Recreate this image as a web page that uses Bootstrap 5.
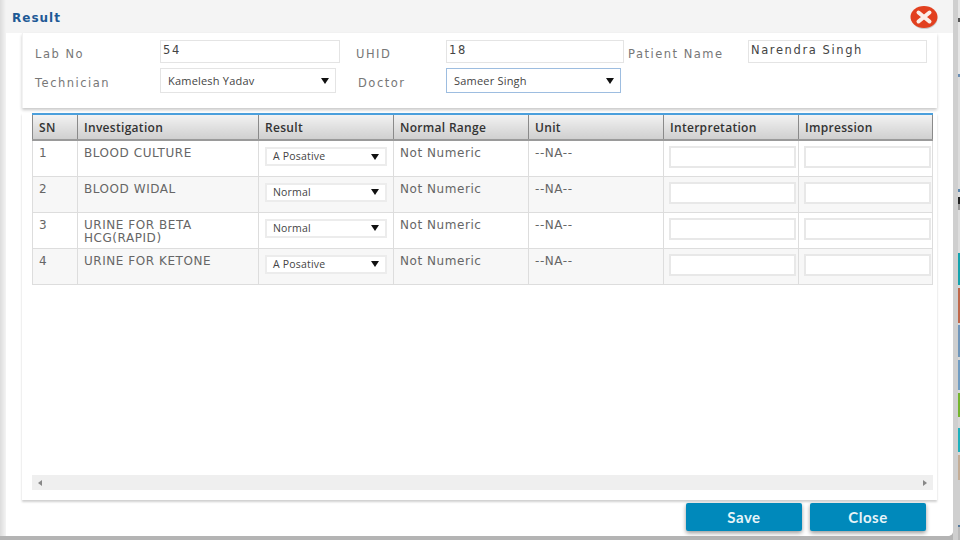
<!DOCTYPE html>
<html lang="en">
<head>
<meta charset="utf-8">
<link href="https://cdn.jsdelivr.net/npm/bootstrap@5.3.0/dist/css/bootstrap.min.css" rel="stylesheet">
<style>
html,body{margin:0;height:540px;overflow:hidden;background:#b4b4b4;}
body{font-family:"DejaVu Sans",sans-serif;color:#555;display:flex;align-items:flex-start;}
.shell{width:953px;height:536px;flex:none;background:linear-gradient(90deg,#dcdcdc,#f4f4f4 6px);display:flex;flex-direction:column;border-radius:0 0 5px 0;}
.rail{flex:1;height:540px;display:flex;justify-content:flex-end;background:#cfcfcf;}
.strip{width:2px;height:540px;background:linear-gradient(180deg,#e6e6e6 0,#e6e6e6 18px,#555 18px,#555 22px,#e6e6e6 22px,#e6e6e6 74px,#6b8fb5 74px,#6b8fb5 77px,#dcdcdc 77px,#dcdcdc 189px,#5b86ad 189px,#5b86ad 192px,#ddd 192px,#ddd 197px,#222 197px,#222 204px,#999 204px,#999 210px,#ddd 210px,#ddd 253px,#14a3ae 253px,#14a3ae 285px,#d8d8d8 285px,#d8d8d8 288px,#c0674a 288px,#c0674a 323px,#d8d8d8 323px,#d8d8d8 325px,#6f96bb 325px,#6f96bb 357px,#d8d8d8 357px,#d8d8d8 360px,#6f9cc2 360px,#6f9cc2 390px,#d8d8d8 390px,#d8d8d8 393px,#74b52e 393px,#74b52e 417px,#d8d8d8 417px,#d8d8d8 428px,#1cb0bd 428px,#1cb0bd 452px,#d8d8d8 452px,#d8d8d8 455px,#c4ad96 455px,#c4ad96 480px,#cfcfcf 480px,#cfcfcf 525px,#55799c 525px,#55799c 527px,#bbb 527px);}
.headbar{height:33px;flex:none;display:flex;align-items:center;justify-content:space-between;padding:0 14px 0 12px;}
.headbar h1{margin:3px 0 0;font-size:12px;font-weight:700;color:#1e5a96;letter-spacing:1px;font-family:"DejaVu Sans",sans-serif;}
.inner{flex:1;background:#fff;margin-left:6px;border-radius:0 0 5px 0;padding:0 17px 0 16px;display:flex;flex-direction:column;min-height:0;}
.topform{height:75px;flex:none;box-shadow:0 2px 3px #c8c8c8;padding:7px 0 0;border-left:1px solid #f2f2f2;margin-right:-1px;}
.lineup{display:flex;height:23px;}
.lineup.second{height:25px;margin-top:5px;}
.lab{font-size:11.5px;letter-spacing:1.5px;color:#777;padding-top:6px;}
.second .lab{padding-top:7px;}
.w-lab{width:137px;padding-left:12px;}
.w-uhid{width:106px;padding-left:16px;}
.w-pat{width:124px;padding-left:4px;}
.w-doc{width:110px;padding-left:22px;}
.fld{height:23px;background:#fff;border:1px solid #e4e4e4;font-size:11.5px;letter-spacing:1.6px;color:#444;padding:1px 2px;line-height:16px;}
.w-f1{width:180px}.w-f2{width:178px}.w-f3{width:179px}
.pick{height:25px;background:#fff;border:1px solid #e4e4e4;font-family:"Open Sans",sans-serif;font-size:11px;letter-spacing:.2px;color:#444;padding:1px 6px 0 7px;display:flex;align-items:center;justify-content:space-between;}
.w-p1{width:176px}.w-p2{width:175px}
.pick.on{border-color:#9dbde0;}
.tri{width:0;height:0;border-left:4px solid transparent;border-right:4px solid transparent;border-top:6px solid #111;flex:none;}
.gridzone{flex:1;min-height:0;display:flex;flex-direction:column;margin-top:5px;padding:0 4px 0 10px;box-shadow:0 2px 2px #d0d0d0;margin-right:-1px;}
.tbl{table-layout:fixed;width:900px;border-collapse:collapse;border-top:2px solid #4a9fdc;margin:0;}
.tbl th{height:26px;font-family:"Open Sans",sans-serif;font-size:12px;font-weight:600;color:#333;letter-spacing:.3px;padding:1px 6px 0;background:linear-gradient(#f2f2f2,#cfcfcf);border-right:1px solid #8a8a8a;border-left:1px solid #8a8a8a;border-bottom:2px solid #9a9a9a;}
.tbl td{height:36px;vertical-align:top;padding:6px 6px 0;font-size:12px;letter-spacing:.55px;line-height:13px;color:#666;border:1px solid #ddd;}
.tbl tbody tr:nth-child(even) td{background:#f7f7f7;}
.tbl td.ctl{padding:6px 6px 0;}
.tbl td.boxcell{padding:5px 2px 0 5px;}
.tbl td.boxcell.last{padding-right:1px;}
.pick.sm{height:19px;font-size:10.5px;border:2px solid #ececec;width:122px;padding:0 6px 0 6px;}
.box{height:22px;background:#fff;border:2px solid #e8e8e8;}
.spacer{flex:1;}
.hscroll{height:15px;flex:none;background:#efefef;display:flex;align-items:center;justify-content:space-between;padding:0 6px;margin-bottom:10px;}
.al{width:0;height:0;border-top:3px solid transparent;border-bottom:3px solid transparent;border-right:4px solid #888;}
.ar{width:0;height:0;border-top:3px solid transparent;border-bottom:3px solid transparent;border-left:4px solid #888;}
.foot{height:36px;flex:none;display:flex;justify-content:flex-end;gap:8px;padding:3px 10px 0 0;}
.act{width:116px;height:28px;padding:1px 0 0;border:0;border-radius:2px;background:#0089bb;color:#e6f4f8;font-size:15px;font-weight:700;box-shadow:0 2px 4px #999;font-family:Lato,sans-serif;letter-spacing:.5px;line-height:1;}
.act:hover{background:#0089bb;color:#e6f4f8;}
</style>
</head>
<body>
<div class="shell">
  <div class="headbar">
    <h1>Result</h1>
    <svg width="30" height="26" viewBox="0 0 30 26" aria-hidden="true"><ellipse cx="15.5" cy="14.5" rx="13" ry="10.5" fill="#999" opacity=".45"/><ellipse cx="15" cy="13" rx="13.5" ry="11" fill="#e2401f"/><path d="M9.5 8.5l11 9M20.5 8.5l-11 9" stroke="#fbeee8" stroke-width="4" stroke-linecap="round"/></svg>
  </div>
  <div class="inner">
    <div class="topform">
      <div class="lineup">
        <div class="lab w-lab">Lab No</div>
        <div class="fld w-f1">54</div>
        <div class="lab w-uhid">UHID</div>
        <div class="fld w-f2">18</div>
        <div class="lab w-pat">Patient Name</div>
        <div class="fld w-f3">Narendra Singh</div>
      </div>
      <div class="lineup second">
        <div class="lab w-lab">Technician</div>
        <div class="pick w-p1"><span>Kamelesh Yadav</span><span class="tri"></span></div>
        <div class="lab w-doc">Doctor</div>
        <div class="pick on w-p2"><span>Sameer Singh</span><span class="tri"></span></div>
      </div>
    </div>
    <div class="gridzone">
      <table class="tbl">
        <colgroup><col style="width:45px"><col style="width:181px"><col style="width:135px"><col style="width:135px"><col style="width:135px"><col style="width:135px"><col style="width:134px"></colgroup>
        <thead><tr><th>SN</th><th>Investigation</th><th>Result</th><th>Normal Range</th><th>Unit</th><th>Interpretation</th><th>Impression</th></tr></thead>
        <tbody>
          <tr><td>1</td><td>BLOOD CULTURE</td><td class="ctl"><div class="pick sm"><span>A Posative</span><span class="tri"></span></div></td><td>Not Numeric</td><td>--NA--</td><td class="boxcell"><div class="box"></div></td><td class="boxcell last"><div class="box"></div></td></tr>
          <tr><td>2</td><td>BLOOD WIDAL</td><td class="ctl"><div class="pick sm"><span>Normal</span><span class="tri"></span></div></td><td>Not Numeric</td><td>--NA--</td><td class="boxcell"><div class="box"></div></td><td class="boxcell last"><div class="box"></div></td></tr>
          <tr><td>3</td><td>URINE FOR BETA HCG(RAPID)</td><td class="ctl"><div class="pick sm"><span>Normal</span><span class="tri"></span></div></td><td>Not Numeric</td><td>--NA--</td><td class="boxcell"><div class="box"></div></td><td class="boxcell last"><div class="box"></div></td></tr>
          <tr><td>4</td><td>URINE FOR KETONE</td><td class="ctl"><div class="pick sm"><span>A Posative</span><span class="tri"></span></div></td><td>Not Numeric</td><td>--NA--</td><td class="boxcell"><div class="box"></div></td><td class="boxcell last"><div class="box"></div></td></tr>
        </tbody>
      </table>
      <div class="spacer"></div>
      <div class="hscroll"><span class="al"></span><span class="ar"></span></div>
    </div>
    <div class="foot">
      <button type="button" class="btn act">Save</button>
      <button type="button" class="btn act">Close</button>
    </div>
  </div>
</div>
<div class="rail"><div class="strip"></div></div>
</body>
</html>
